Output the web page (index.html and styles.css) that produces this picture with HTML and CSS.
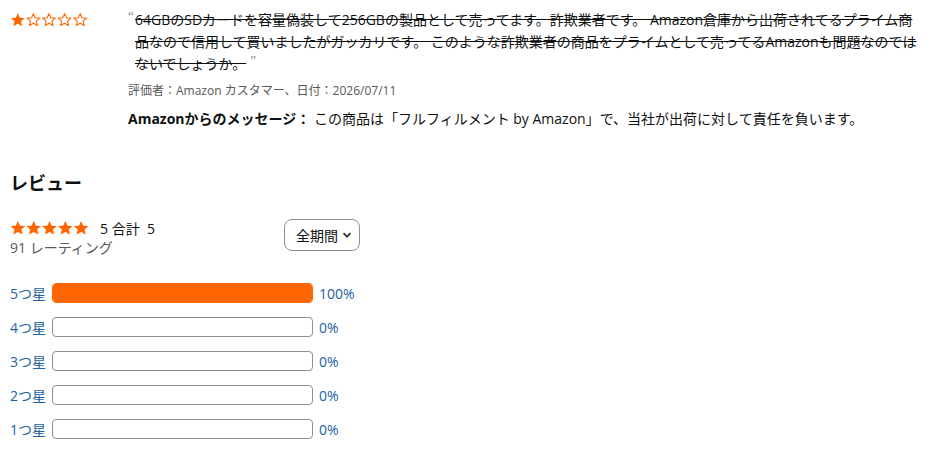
FILE: index.html
```html
<!DOCTYPE html>
<html lang="ja">
<head>
    <meta charset="UTF-8">
    <title>レビュー</title>
    <link rel="stylesheet" href="styles.css">
</head>
<body>
<div class="review">
    <div class="review-stars">
        <svg class="stars-small" viewBox="0 0 80 16" width="80" height="16">
            <path class="star-full" d="M8 1l2.1 4.6 5 .5-3.8 3.3 1.1 4.9L8 11.8 3.6 14.3l1.1-4.9L.9 6.1l5-.5z"/>
            <path class="star-empty" transform="translate(16 0)" d="M8 1.6l1.9 4.1 4.5.5-3.4 3 1 4.4L8 11.3l-4 2.3 1-4.4-3.4-3 4.5-.5z"/>
            <path class="star-empty" transform="translate(32 0)" d="M8 1.6l1.9 4.1 4.5.5-3.4 3 1 4.4L8 11.3l-4 2.3 1-4.4-3.4-3 4.5-.5z"/>
            <path class="star-empty" transform="translate(48 0)" d="M8 1.6l1.9 4.1 4.5.5-3.4 3 1 4.4L8 11.3l-4 2.3 1-4.4-3.4-3 4.5-.5z"/>
            <path class="star-empty" transform="translate(64 0)" d="M8 1.6l1.9 4.1 4.5.5-3.4 3 1 4.4L8 11.3l-4 2.3 1-4.4-3.4-3 4.5-.5z"/>
        </svg>
    </div>
    <div class="review-body">
        <p class="review-text"><span class="quote">&ldquo;</span><s>64GBのSDカードを容量偽装して256GBの製品として売ってます。詐欺業者です。 Amazon倉庫から出荷されてるプライム商品なので信用して買いましたがガッカリです。 このような詐欺業者の商品をプライムとして売ってるAmazonも問題なのではないでしょうか。</s><span class="quote quote-end">&rdquo;</span></p>
        <p class="review-meta">評価者：Amazon カスタマー、日付：2026/07/11</p>
        <p class="review-message"><b>Amazonからのメッセージ：</b> この商品は「フルフィルメント by Amazon」で、当社が出荷に対して責任を負います。</p>
    </div>
</div>

<h2 class="section-title">レビュー</h2>

<div class="summary">
    <div class="summary-left">
        <div class="summary-stars">
            <svg viewBox="0 0 80 16" width="80" height="16">
                <path class="star-full" d="M8 .8l2.2 4.8 5.2.5-3.9 3.4 1.2 5.1L8 12 3.3 14.6l1.2-5.1L.6 6.1l5.2-.5z"/>
                <path class="star-full" transform="translate(16 0)" d="M8 .8l2.2 4.8 5.2.5-3.9 3.4 1.2 5.1L8 12 3.3 14.6l1.2-5.1L.6 6.1l5.2-.5z"/>
                <path class="star-full" transform="translate(32 0)" d="M8 .8l2.2 4.8 5.2.5-3.9 3.4 1.2 5.1L8 12 3.3 14.6l1.2-5.1L.6 6.1l5.2-.5z"/>
                <path class="star-full" transform="translate(48 0)" d="M8 .8l2.2 4.8 5.2.5-3.9 3.4 1.2 5.1L8 12 3.3 14.6l1.2-5.1L.6 6.1l5.2-.5z"/>
                <path class="star-full" transform="translate(64 0)" d="M8 .8l2.2 4.8 5.2.5-3.9 3.4 1.2 5.1L8 12 3.3 14.6l1.2-5.1L.6 6.1l5.2-.5z"/>
            </svg>
            <span class="summary-score">5 合計&nbsp;&nbsp;5</span>
        </div>
        <div class="summary-count">91 レーティング</div>
    </div>
    <button class="period-btn">全期間
        <svg viewBox="0 0 10 10" width="10" height="10"><path d="M1.5 3.2L5 6.7l3.5-3.5" fill="none" stroke="#333" stroke-width="1.8"/></svg>
    </button>
</div>

<div class="histogram">
    <div class="hist-row">
        <span class="hist-label">5つ星</span>
        <div class="hist-bar"><div class="hist-fill" style="width:100%"></div></div>
        <span class="hist-pct">100%</span>
    </div>
    <div class="hist-row">
        <span class="hist-label">4つ星</span>
        <div class="hist-bar"><div class="hist-fill" style="width:0%"></div></div>
        <span class="hist-pct">0%</span>
    </div>
    <div class="hist-row">
        <span class="hist-label">3つ星</span>
        <div class="hist-bar"><div class="hist-fill" style="width:0%"></div></div>
        <span class="hist-pct">0%</span>
    </div>
    <div class="hist-row">
        <span class="hist-label">2つ星</span>
        <div class="hist-bar"><div class="hist-fill" style="width:0%"></div></div>
        <span class="hist-pct">0%</span>
    </div>
    <div class="hist-row">
        <span class="hist-label">1つ星</span>
        <div class="hist-bar"><div class="hist-fill" style="width:0%"></div></div>
        <span class="hist-pct">0%</span>
    </div>
</div>
</body>
</html>
```

FILE: styles.css
```css
*{
    box-sizing: border-box;
}
body{
    margin: 0;
    padding: 9px 10px 0 10px;
    font-family: "Open Sans", "Noto Sans CJK JP", sans-serif;
    font-size: 14px;
    color: #0f1111;
    background: #fff;
}
p{
    margin: 0;
}
.star-full{
    fill: #ff6600;
}
.star-empty{
    fill: none;
    stroke: #ff6600;
    stroke-width: 1.1;
}
.review{
    display: flex;
}
.review-stars{
    width: 118px;
    flex-shrink: 0;
    padding-top: 3px;
}
.stars-small{
    display: block;
    width: 78px;
    height: 16px;
}
.review-body{
    width: 792px;
}
.review-text{
    line-height: 22px;
    padding-left: 7px;
    text-indent: -7px;
}
.review-text s{
    text-decoration-color: #0f1111;
}
.quote{
    display: inline-block;
    width: 7px;
    text-indent: 0;
    font-family: "Liberation Serif", serif;
    font-size: 13px;
    color: #888;
    vertical-align: top;
    line-height: 14px;
}
.quote-end{
    margin-left: 4px;
}
.review-meta{
    margin-top: 7px;
    font-size: 12px;
    line-height: 18px;
    color: #565959;
}
.review-message{
    margin-top: 8px;
    line-height: 22px;
    white-space: nowrap;
}
.section-title{
    margin: 40px 0 0 0;
    font-size: 18px;
    line-height: 26px;
    font-weight: bold;
}
.summary{
    width: 350px;
    margin-top: 22px;
    display: flex;
    justify-content: space-between;
    align-items: flex-start;
}
.summary-stars{
    display: flex;
    align-items: center;
    height: 20px;
}
.summary-stars svg{
    display: block;
    width: 79px;
    height: 16px;
}
.summary-score{
    margin-left: 11px;
}
.summary-count{
    color: #565959;
    line-height: 20px;
}
.period-btn{
    margin-top: 1px;
    height: 32px;
    padding: 0 7px 0 11px;
    display: flex;
    align-items: center;
    gap: 4px;
    font-family: inherit;
    font-size: 14px;
    color: #0f1111;
    background: #fff;
    border: 1px solid #8d9096;
    border-radius: 8px;
}
.histogram{
    margin-top: 25px;
}
.hist-row{
    display: flex;
    align-items: center;
    height: 20px;
    margin-bottom: 14px;
}
.hist-label{
    width: 42px;
    color: #2162a1;
}
.hist-bar{
    width: 261px;
    height: 20px;
    border: 1px solid #8d9096;
    border-radius: 4px;
    overflow: hidden;
}
.hist-fill{
    height: 100%;
    background: #ff6600;
}
.hist-row:first-child .hist-bar{
    border-color: #ff6600;
}
.hist-pct{
    margin-left: 6px;
    color: #2162a1;
}
```
